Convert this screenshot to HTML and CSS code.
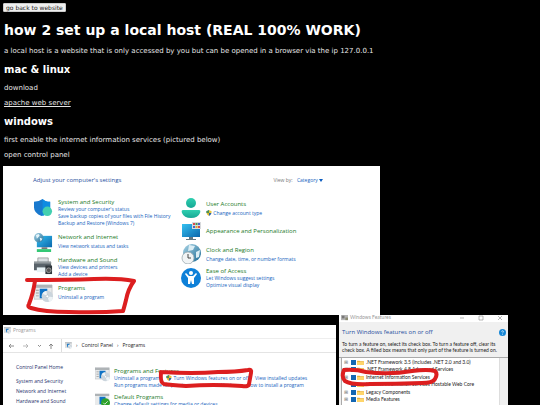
FILE: index.html
```html
<!DOCTYPE html>
<html lang="en">
<head>
<meta charset="utf-8">
<title>how 2 set up a local host</title>
<link rel="stylesheet" href="styles.css">
</head>
<body>
<svg width="0" height="0" class="defs" aria-hidden="true">
  <defs>
    <linearGradient id="gBlue" x1="0" y1="0" x2="1" y2="1"><stop offset="0" stop-color="#35c1f1"/><stop offset="1" stop-color="#0b67ac"/></linearGradient>
    <linearGradient id="gTeal" x1="0" y1="0" x2="0" y2="1"><stop offset="0" stop-color="#2fd0b0"/><stop offset="1" stop-color="#16a795"/></linearGradient>
    <linearGradient id="gGlobe" x1="0" y1="0" x2="1" y2="1"><stop offset="0" stop-color="#a9d4e6"/><stop offset="1" stop-color="#1d6c96"/></linearGradient>
    <symbol id="uac" viewBox="0 0 12 12"><path d="M6 0Q3 2 1 2v4h5z" fill="#3a78bd"/><path d="M6 0q3 2 5 2v4H6z" fill="#e7c63a"/><path d="M1 6h5v6Q2 10 1 6z" fill="#dfbd32"/><path d="M6 6h5q-1 4-5 6z" fill="#2b65a8"/><path d="M6 0v6H1V2q3 0 5-2z" fill="#51934d"/></symbol>
    <symbol id="prog" viewBox="0 0 20 20"><path d="M0 1h19v15H0z" fill="#e8eaeb" stroke="#b5babd" stroke-width=".7"/><path d="M0 1h19v3H0z" fill="#aeb3b6"/><path d="M2 6h3v1H2zm0 3h3v1H2zm0 3h3v1H2z" fill="#999"/><path d="M6 5h8v10H6z" fill="#0e72c5"/><circle cx="14" cy="13" r="6" fill="#cbd5dd"/><path d="M14 13l-5-3a6 6 0 0 1 4-3zM14 13l6 1a6 6 0 0 1-4 5z" fill="#edf3f6"/><circle cx="14" cy="13" r="1.5" fill="#fff" stroke="#aabac5" stroke-width=".6"/></symbol>
    <symbol id="folder" viewBox="0 0 11 8"><path d="M0 1h4l1 1h6v6H0z" fill="#e9ae31"/><path d="M0 3h11v5H0z" fill="#ffd66b"/></symbol>
  </defs>
</svg>
<main class="page">
  <button class="back" type="button">go back to website</button>
  <h1>how 2 set up a local host (REAL 100% WORK)</h1>
  <p>a local host is a website that is only accessed by you but can be opened in a browser via the ip 127.0.0.1</p>
  <h2>mac &amp; linux</h2>
  <p>download</p>
  <p><a class="download" href="#">apache web server</a></p>
  <h2>windows</h2>
  <p>first enable the internet information services (pictured below)</p>
  <p>open control panel</p>

  <section class="panel settings">
    <header class="settings-head">
      <h3>Adjust your computer's settings</h3>
      <span class="viewby">View by: <a href="#">Category <svg class="caret" viewBox="0 0 4 3"><path d="M0 0h4L2 3z" fill="#0b5cc0"/></svg></a></span>
    </header>
    <div class="categories">
      <div class="col col-left">
        <div class="cat">
          <svg class="icon" viewBox="0 0 20 20"><path d="M9 1Q5 4 0 4v6q0 6 8 9 9-3 9-9V4q-5 0-8-3z" fill="#1979ce"/><path d="M9 1v18q8-3 8-9V4q-5 0-8-3z" fill="#0f8be2"/><circle cx="14" cy="14" r="5" fill="#43cfb0"/></svg>
          <div><h4>System and Security</h4><a href="#">Review your computer's status</a><a href="#">Save backup copies of your files with File History</a><a href="#">Backup and Restore (Windows 7)</a></div>
        </div>
        <div class="cat single">
          <svg class="icon" viewBox="0 0 20 20"><path d="M3 3h16v12H3z" fill="url(#gBlue)"/><path d="M8 15h6v2H8z" fill="#777"/><path d="M3 17h15v3H3z" fill="#34c875"/><circle cx="5" cy="5" r="5" fill="url(#gGlobe)"/><path d="M2 2l3-1 1 2-3 3zM6 5l3 1-2 3z" fill="#e4f4fa"/></svg>
          <div><h4>Network and Internet</h4><a href="#">View network status and tasks</a></div>
        </div>
        <div class="cat">
          <svg class="icon" viewBox="0 0 20 20"><path d="M4 2h11v6H4z" fill="#d9dee1" stroke="#777" stroke-width=".6"/><path d="M0 6h18v9H0z" fill="#59636a"/><path d="M0 6h18v2H0z" fill="#92999d"/><path d="M3 12h12v5H3z" fill="#e7f2f5"/><path d="M12 10h7v9h-7z" fill="#30373c"/><circle cx="15.500" cy="15" r="2.500" fill="#555" stroke="#bbb" stroke-width=".7"/></svg>
          <div><h4>Hardware and Sound</h4><a href="#">View devices and printers</a><a href="#">Add a device</a></div>
        </div>
        <div class="cat single">
          <svg class="icon" viewBox="0 0 20 20"><use href="#prog"/></svg>
          <div><h4>Programs</h4><a href="#">Uninstall a program</a></div>
        </div>
      </div>
      <div class="col col-right">
        <div class="cat single">
          <svg class="icon" viewBox="0 0 20 20"><circle cx="10" cy="5" r="5" fill="url(#gTeal)"/><path d="M2 12h16q2 0 1 3-2 5-9 5t-9-5q-1-3 1-3z" fill="url(#gTeal)"/></svg>
          <div><h4>User Accounts</h4><a href="#"><svg class="shield"><use href="#uac"/></svg> Change account type</a></div>
        </div>
        <div class="cat">
          <svg class="icon" viewBox="0 0 20 20"><path d="M1 3h18v13H1z" fill="url(#gBlue)"/><path d="M8 16h4v2h3v1H5v-1h3z" fill="#607783"/><path d="M11 1h9v7h-9z" fill="#d8dadd"/><path d="M12 2h2v2h-2zm5 3h2v2h-2z" fill="#d94b4b"/><path d="M14.500 2h2v2h-2z" fill="#4b9a50"/><path d="M17 2h2v2h-2zm-5 3h2v2h-2z" fill="#4a66c9"/><path d="M14.500 5h2v2h-2z" fill="#e6a628"/></svg>
          <div><h4>Appearance and Personalization</h4></div>
        </div>
        <div class="cat single">
          <svg class="icon" viewBox="0 0 20 20"><circle cx="11" cy="9" r="9" fill="url(#gGlobe)"/><path d="M8 1l6 1-2 4-5 1zM15 8l4-2-1 7-3 1z" fill="#dceef5"/><circle cx="7" cy="14" r="6" fill="#f1f4f5" stroke="#9ca8ae" stroke-width=".8"/><path d="M7 10v4h3" fill="none" stroke="#333" stroke-width=".9"/></svg>
          <div><h4>Clock and Region</h4><a href="#">Change date, time, or number formats</a></div>
        </div>
        <div class="cat">
          <svg class="icon" viewBox="0 0 20 20"><circle cx="10" cy="10" r="10" fill="#0e80d8"/><circle cx="10" cy="5" r="2" fill="#fff"/><path d="M5 5l3 3h4l3-3 1 1-3 4v6h-2l-1-4-1 4H7v-6L4 6z" fill="#fff"/></svg>
          <div><h4>Ease of Access</h4><a href="#">Let Windows suggest settings</a><a href="#">Optimize visual display</a></div>
        </div>
      </div>
    </div>
    <svg class="mark mark-programs" viewBox="0 0 112 38"><path d="M3 3Q45 3 70 2Q95 1 110 4Q104 12 102 23Q100 31 99 34Q75 36 45 35Q20 35 7 31Q3 30 5 27Q9 17 11 4" fill="none" stroke="#dc1e1f" stroke-width="4" stroke-linecap="round" stroke-linejoin="round"/></svg>
  </section>

  <div class="shots">
    <section class="panel programs">
      <header class="titlebar"><svg class="tiny"><use href="#prog"/></svg>Programs</header>
      <nav class="toolbar">
        <svg class="arrows" viewBox="0 0 52 8" fill="none" stroke="#707070" stroke-width=".8"><path d="M8 4H3m2-2L3 4l2 2"/><path d="M17 4h5m-2-2l2 2-2 2" stroke="#aaa"/><path d="M32 3l1.500 1.500L35 3M45 7V2m-2 2l2-2 2 2"/></svg>
        <div class="address"><svg class="tiny"><use href="#prog"/></svg><span>›</span><span>Control Panel</span><span>›</span><span>Programs</span></div>
      </nav>
      <div class="programs-body">
        <aside><a href="#">Control Panel Home</a><a href="#">System and Security</a><a href="#">Network and Internet</a><a href="#">Hardware and Sound</a></aside>
        <div class="programs-list">
          <div class="cat">
            <svg class="icon"><use href="#prog"/></svg>
            <div><h4>Programs and Features</h4>
              <div class="links"><a href="#">Uninstall a program</a><a class="turn" href="#"><svg class="shield"><use href="#uac"/></svg> Turn Windows features on or off</a><a href="#">View installed updates</a></div>
              <div class="links run"><a href="#">Run programs made for previous versions of Windows</a><a href="#">How to install a program</a></div>
            </div>
          </div>
          <div class="cat">
            <svg class="icon" viewBox="0 0 20 20"><path d="M0 1h19v15H0z" fill="#e8eaeb"/><path d="M0 1h19v3H0z" fill="#aeb3b6"/><path d="M6 5h8v10H6z" fill="#0e72c5"/><circle cx="14" cy="13" r="6" fill="#2fa12c"/><path d="M11 13l2 2 4-4" fill="none" stroke="#fff"/></svg>
            <div><h4>Default Programs</h4><a href="#">Change default settings for media or devices</a></div>
          </div>
        </div>
      </div>
      <svg class="mark mark-turn" viewBox="0 0 96 22"><path d="M3 4Q35 6 60 4Q78 4 90 2Q94 1 93 5L91 16Q91 19 84 18Q55 16 28 18Q12 17 6 16Q2 15 3 4" fill="none" stroke="#dc1e1f" stroke-width="4" stroke-linecap="round" stroke-linejoin="round"/></svg>
    </section>

    <section class="panel features">
      <header class="titlebar"><svg class="tiny" viewBox="0 0 8 8"><path d="M0 1h8v6H0z" fill="#b5b5b5"/><path d="M1 2h3v3H1z" fill="#777"/><path d="M5 4h3v3H5z" fill="#8b8b72"/></svg>Windows Features
        <svg class="winctl" viewBox="0 0 44 6" fill="none" stroke="#999" stroke-width=".7"><path d="M1 3h4M20 1h4v4h-4zM39 1l4 4m0-4l-4 4"/></svg></header>
      <div class="features-head">
        <div class="features-title"><h3>Turn Windows features on or off</h3><svg class="help" viewBox="0 0 8 8"><circle cx="4" cy="4" r="4" fill="#1687d6"/><path d="M3 3q0-1 1-1t1 1-1 1.500M4 5.500v1" fill="none" stroke="#fff" stroke-width=".8"/></svg></div>
        <p>To turn a feature on, select its check box. To turn a feature off, clear its check box. A filled box means that only part of the feature is turned on.</p>
      </div>
      <ul class="tree">
        <li><i>⊞</i><input type="checkbox" aria-label=".NET Framework 3.5" checked><svg><use href="#folder"/></svg>.NET Framework 3.5 (includes .NET 2.0 and 3.0)</li>
        <li><i>⊞</i><input type="checkbox" aria-label=".NET Framework 4.8" checked><svg><use href="#folder"/></svg>.NET Framework 4.8 Advanced Services</li>
        <li><i>⊞</i><input type="checkbox" aria-label="Internet Information Services" checked><svg><use href="#folder"/></svg>Internet Information Services</li>
        <li><i></i><input type="checkbox" aria-label="Hostable Web Core" checked><svg><use href="#folder"/></svg>Internet Information Services Hostable Web Core</li>
        <li><i>⊞</i><input type="checkbox" aria-label="Legacy Components" checked><svg><use href="#folder"/></svg>Legacy Components</li>
        <li><i>⊞</i><input type="checkbox" aria-label="Media Features" checked><svg><use href="#folder"/></svg>Media Features</li>
        <li><i>⊞</i><input type="checkbox" aria-label="Message Queue"><svg><use href="#folder"/></svg></li>
      </ul>
      <svg class="mark mark-iis" viewBox="0 0 100 22"><path d="M4 4Q15 3 26 6Q50 9 72 5Q88 3 95 5Q98 8 95 13Q93 17 82 17Q55 18 30 18Q11 19 5 15Q1 11 4 4" fill="none" stroke="#dc1e1f" stroke-width="4" stroke-linecap="round" stroke-linejoin="round"/></svg>
    </section>
  </div>
</main>
</body>
</html>
```

FILE: styles.css
```css
* { box-sizing: border-box; }
body { margin: 0; background: #000; color: #fff; font-family: "DejaVu Sans", Verdana, sans-serif; font-size: 6px; line-height: 8px; overflow: hidden; }
.defs { position: absolute; }
.page { height: 100vh; padding: 3px; overflow: hidden; }
h1, h2, h3, h4, p, ul { margin: 0; padding: 0; }
h1 { font-size: 14px; line-height: 16px; margin: 10px 0 9px; }
h2 { font-size: 10px; line-height: 14px; margin: 8px 0 7px; }
.page > p { font-size: 7px; line-height: 8px; margin: 7px 0; color: #e6e6e6; padding-left: 1px; }
.page > h1, .page > h2 { padding-left: 1px; }
.back { display: block; font: 6px/7px "DejaVu Sans", sans-serif; color: #222; background: #efefef; border: 1px solid #ccc; border-radius: 1px; padding: 0 2px; }
.download { color: inherit; }

.panel { position: relative; background: #fff; color: #222; font-family: "Open Sans", "Noto Sans", sans-serif; font-size: 5px; line-height: 7px; overflow: hidden; }
.panel a { color: #1462bd; text-decoration: none; }
.panel h3 { font-size: 6px; line-height: 8px; font-weight: 400; color: #1f4f9e; }
.panel h4 { font-size: 6px; line-height: 8px; font-weight: 400; color: #1b7a28; }
.panel svg { flex: none; }
.mark { position: absolute; overflow: visible; }

.settings { max-width: 377px; padding: 10px 30px 14px; }
.settings-head { display: flex; justify-content: space-between; align-items: center; padding-right: 27px; margin-bottom: 14px; }
.viewby { color: #777; }
.viewby a { margin-left: 3px; }
.caret { width: 4px; height: 3px; }
.categories { display: grid; grid-template-columns: 148px 1fr; }
.col { display: flex; flex-direction: column; }
.col-left { gap: 6px; padding-left: 1px; }
.col-right { gap: 3px; }
.cat { display: flex; gap: 5px; white-space: nowrap; }
.cat > div > a { display: block; }
.single h4 { margin-bottom: 2px; }
.icon { width: 20px; height: 20px; }
.col-left .icon { width: 19px; height: 19px; margin-bottom: -2px; }
.col-right .cat { align-items: center; min-height: 20px; }
.shield { width: 6px; height: 6px; vertical-align: -1px; }
.mark-programs { width: 112px; height: 38px; left: 21px; top: 111px; }

.shots { display: flex; align-items: flex-start; gap: 3px; }
.programs { flex: 0 1 333px; margin-top: 10px; }
.titlebar { display: flex; align-items: center; gap: 2px; color: #999; }
.tiny { width: 7px; height: 7px; }
.programs .titlebar { height: 14px; padding: 0 1px 3px; border-bottom: 1px solid #eee; }
.toolbar { display: flex; align-items: center; height: 14px; border-bottom: 1px solid #e4e4e4; }
.arrows { width: 52px; height: 8px; margin: 0 3px; }
.address { display: flex; align-items: center; align-self: stretch; gap: 4px; flex: 1; padding-left: 3px; border-left: 1px solid #ddd; }
.programs-body { display: flex; padding: 11px 0 10px 13px; }
aside { flex: 0 0 79px; display: flex; flex-direction: column; gap: 3px; }
.panel aside a { color: #25306b; }
aside a:first-child { margin-bottom: 4px; }
.programs-list { display: flex; flex-direction: column; gap: 4px; padding-top: 3px; }
.programs-list .icon { width: 15px; height: 15px; }
.programs-list .cat { gap: 4px; }
.links { display: flex; gap: 6px; }
.mark-turn { width: 96px; height: 22px; left: 155px; top: 43px; }

.features { flex: 0 1 169px; background: #f0f0f0; font-family: Lato, "Open Sans", sans-serif; }
.features h3 { font-family: "Open Sans", sans-serif; }
.features .titlebar { height: 7px; background: #fff; padding: 0 5px 2px 2px; }
.winctl { width: 44px; height: 6px; margin-left: auto; }
.features-head { padding: 6px 2px 4px 3px; border-bottom: 1px solid #aaa; }
.features-head p { line-height: 6px; margin-top: 5px; }
.features-title { display: flex; justify-content: space-between; align-items: center; }
.help { width: 7px; height: 7px; }
.tree { list-style: none; margin: 0 8px 0 2px; background: #fff; border-left: 1px solid #aaa; border-right: 1px solid #ddd; display: grid; grid-auto-rows: 8px 7px; white-space: nowrap; }
.tree li { display: flex; align-items: center; gap: 1px; padding-left: 2px; }
.tree i { flex: none; width: 6px; font: 5px/7px "DejaVu Sans", sans-serif; color: #777; }
.tree input { appearance: none; flex: none; width: 5px; height: 5px; margin: 0; border: 1px solid #1467b3; }
.tree input:checked { background: #1467b3; }
.tree svg { width: 7px; height: 5px; margin-right: 1px; }
.mark-iis { width: 100px; height: 22px; left: 1px; top: 51px; }
```
